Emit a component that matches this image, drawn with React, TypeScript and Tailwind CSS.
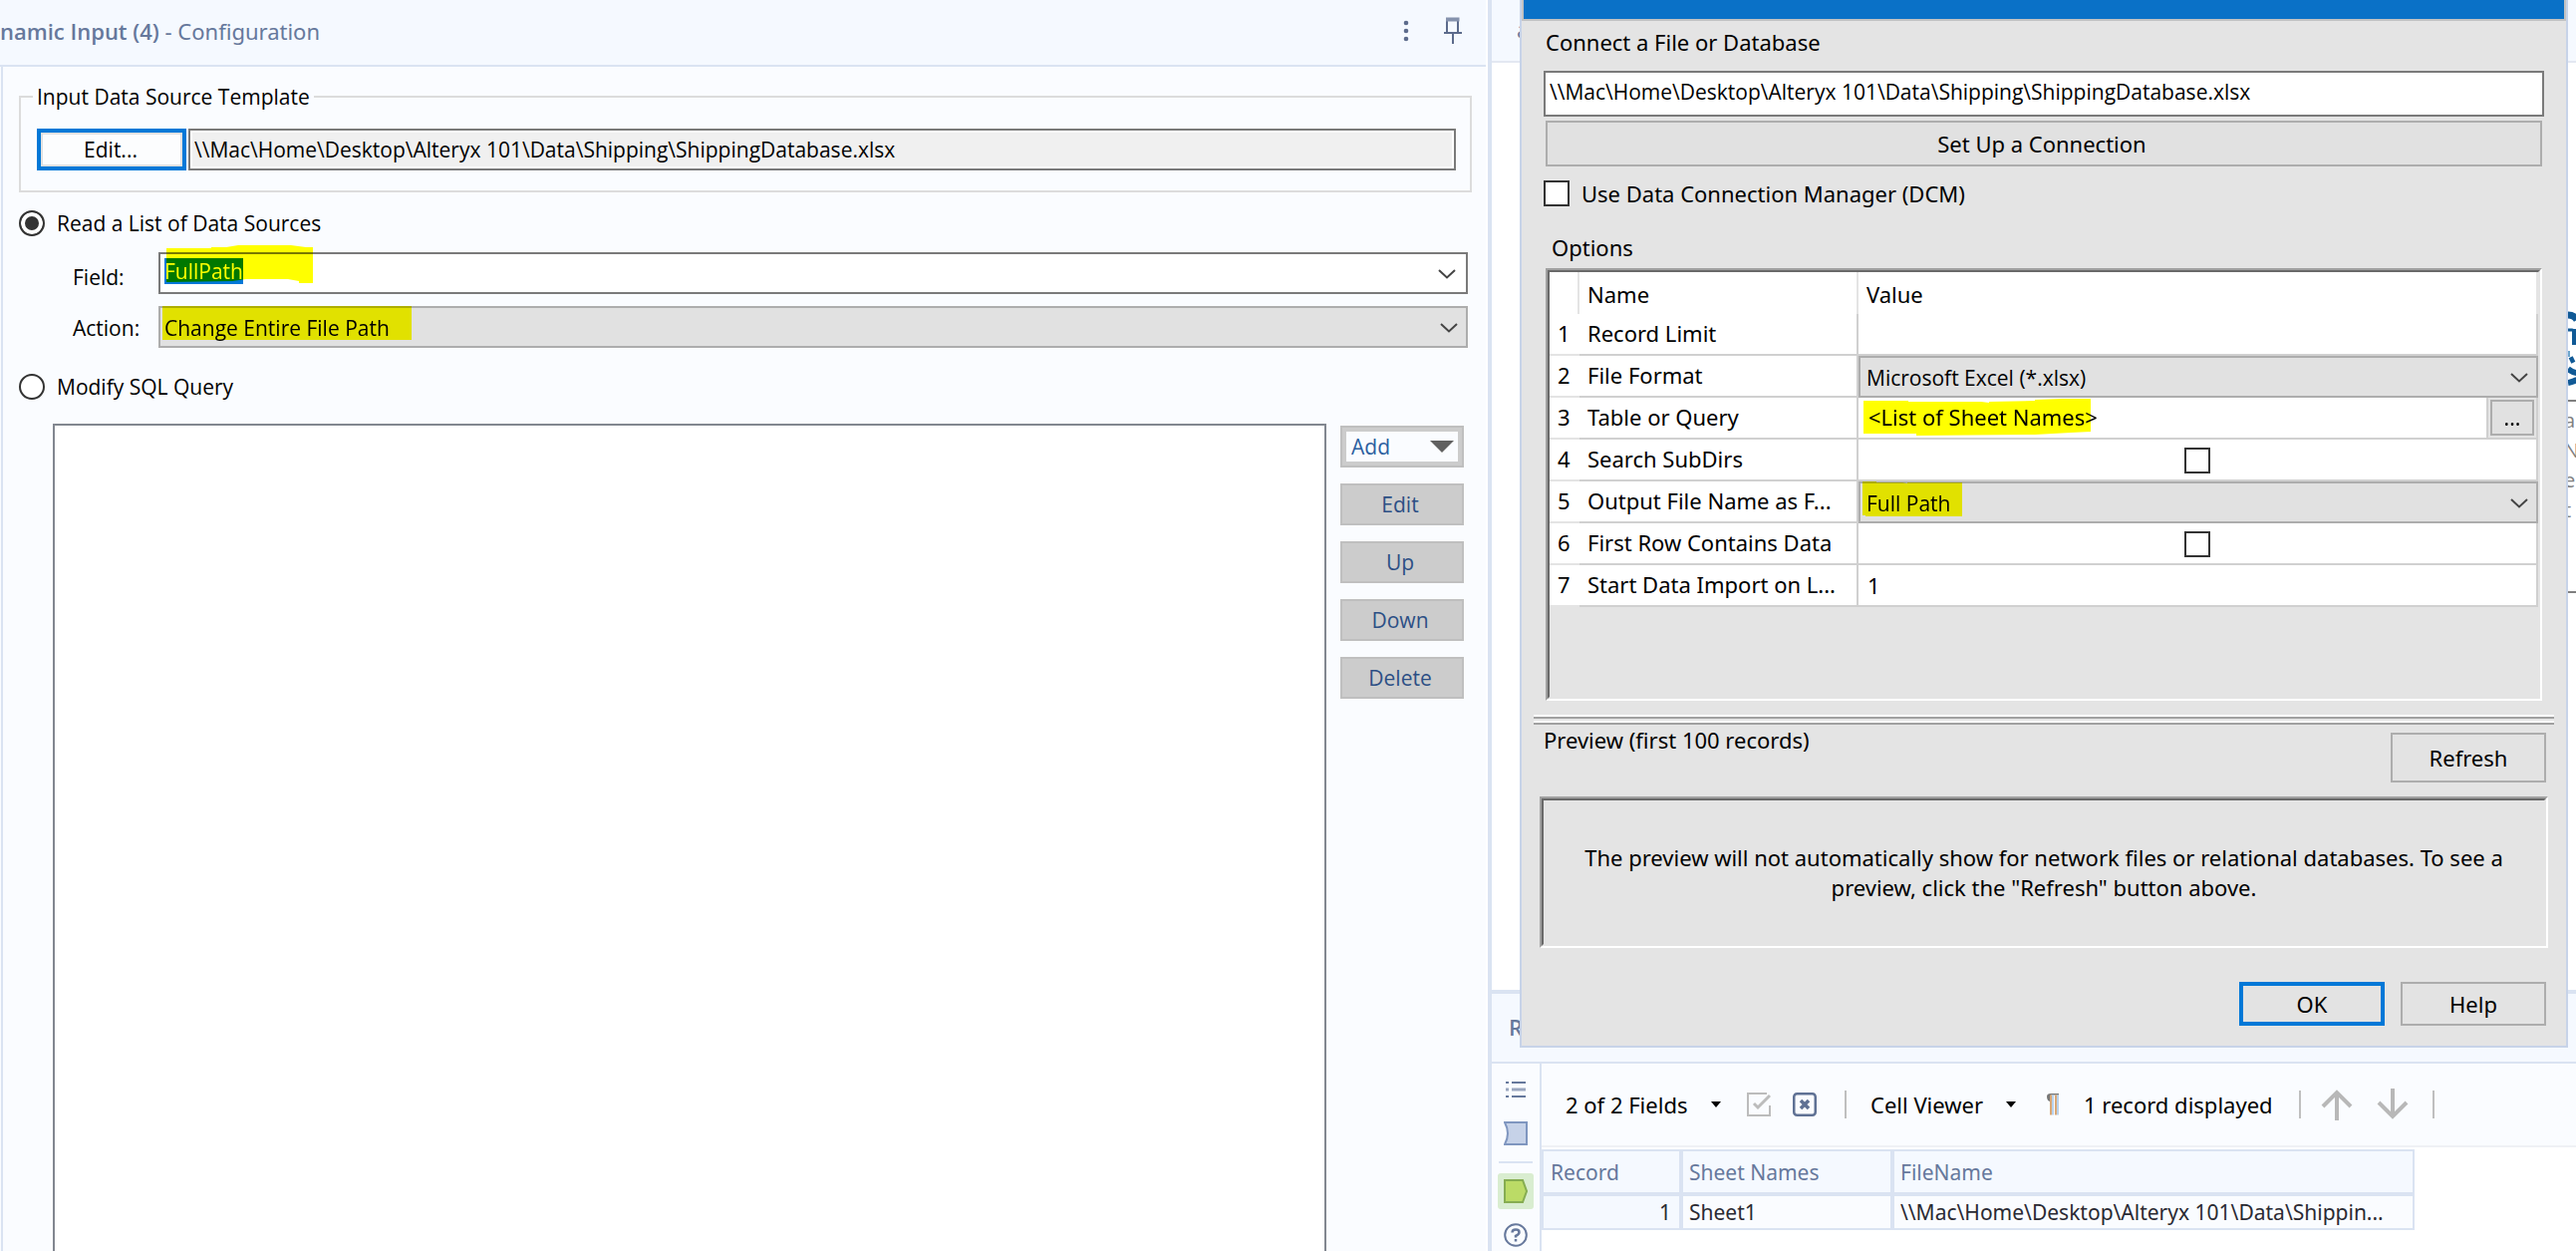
import React from "react";

const FILE_PATH = "\\\\Mac\\Home\\Desktop\\Alteryx 101\\Data\\Shipping\\ShippingDatabase.xlsx";

function Chevron() {
  return (
    <svg
      className="pointer-events-none absolute right-[10px] top-1/2 -mt-[4px]"
      width="18"
      height="10"
      viewBox="0 0 18 10"
      fill="none"
      stroke="#444"
      strokeWidth="2"
      aria-hidden="true"
    >
      <path d="M1 1l8 7.500l8-7.500" />
    </svg>
  );
}

function Marker({ className, points, box }: { className: string; points: string; box: string }) {
  return (
    <svg
      className={"pointer-events-none absolute mix-blend-multiply " + className}
      viewBox={box}
      preserveAspectRatio="none"
      aria-hidden="true"
    >
      <polygon points={points} fill="#ffff00" />
    </svg>
  );
}

function SideButton({ children }: { children: React.ReactNode }) {
  return (
    <button
      type="button"
      className="flex h-[42px] items-center justify-center border-2 border-[#bfbfbf] bg-[#cccccc] pr-[4px] text-[21px] leading-none text-[#2c4f85]"
    >
      {children}
    </button>
  );
}

function ConfigurationPanel() {
  return (
    <section className="flex min-w-0 flex-[1493] flex-col border-r-4 border-[#dae3f2] bg-white">
      <header className="mr-[2px] flex h-[67px] shrink-0 items-center border-b-2 border-[#dae3f2] bg-[#f5f9ff] pb-[3px] text-[22px] text-[#66789c]">
        <h1 className="whitespace-pre leading-[30px]">
          <span className="font-semibold">namic Input (4)</span>
          <span className="font-['Noto_Sans',sans-serif]">{" - Configuration"}</span>
        </h1>
        <div className="ml-auto flex items-center gap-[34px] pr-[23px]">
          <button type="button" aria-label="More options">
            <svg width="6" height="22" viewBox="0 0 6 22" fill="#5c6b8c">
              <circle cx="3" cy="3" r="2.300" />
              <circle cx="3" cy="11" r="2.300" />
              <circle cx="3" cy="19" r="2.300" />
            </svg>
          </button>
          <button type="button" aria-label="Pin panel">
            <svg width="20" height="28" viewBox="0 0 20 28" fill="none" stroke="#5c6b8c" strokeWidth="2">
              <path d="M4 3v13M15 3v13M1 16h18M10 16v11" />
              <path d="M3 2.500h13.500" strokeWidth="4" stroke="#8592ad" />
            </svg>
          </button>
        </div>
      </header>

      <div className="mr-[2px] flex flex-1 flex-col bg-[#fafcff]">
        <div className="ml-[1px] flex flex-1 flex-col border-l-2 border-[#dae3f2] pl-[16px] pr-[14px] text-[21px] leading-[28px] text-black">
          <fieldset className="mt-[16px] h-[110px] border-2 border-[#dcdcdc] pl-[16px] pr-[14px]">
            <legend className="-ml-[4px] h-[28px] px-[4px]">Input Data Source Template</legend>
            <div className="mt-[18px] flex h-[42px] gap-[2px]">
              <button
                type="button"
                className="w-[150px] shrink-0 border-4 border-[#0078d7] bg-[#fcfdfe] pr-[2px] outline-2 -outline-offset-[6px] outline-[#e1e1e1]"
              >
                Edit...
              </button>
              <input
                aria-label="Input data source template path"
                readOnly
                value={FILE_PATH}
                className="min-w-0 flex-1 border-2 border-[#7a7a7a] bg-[#f0f0f0] px-[4px] shadow-[inset_0_0_0_2px_white]"
              />
            </div>
          </fieldset>

          <label className="mt-[17px] flex h-[28px] items-center gap-[12px]">
            <input
              type="radio"
              name="mode"
              defaultChecked
              className="h-[26px] w-[26px] appearance-none rounded-full border-2 border-[#333] bg-white checked:bg-[#333] checked:shadow-[inset_0_0_0_4px_white]"
            />
            Read a List of Data Sources
          </label>

          <div className="mr-[4px] mt-[15px] grid grid-cols-[86px_1fr] gap-y-[12px] pl-[54px]">
            <label htmlFor="field" className="self-center pt-[8px]">
              Field:
            </label>
            <div className="relative isolate flex h-[42px] items-start border-2 border-[#7a7a7a] bg-white pl-[4px] pt-[4px]">
              <input
                id="field"
                role="combobox"
                aria-expanded="false"
                aria-controls="field-list"
                defaultValue="FullPath"
                className="field-sizing-content h-[26px] bg-[#0078d7] text-white"
              />
              <Chevron />
              <Marker
                className="-top-[9px] left-[6px] h-[38px] w-[147px]"
                box="0 0 147 38"
                points="0,3 45,3 45,2 60,2 72,0 125,0 140,2 147,2 147,38 133,38 133,36 122,34 80,34 66,36 0,37"
              />
            </div>
            <label htmlFor="action" className="self-center pt-[2px]">
              Action:
            </label>
            <div className="relative isolate h-[42px]">
              <select
                id="action"
                className="h-full w-full appearance-none border-2 border-[#adadad] bg-[#e1e1e1] pl-[4px] pt-[2px]"
              >
                <option>Change Entire File Path</option>
              </select>
              <Chevron />
              <Marker
                className="left-[4px] top-0 h-[34px] w-[250px]"
                box="0 0 250 34"
                points="0,0 250,0 250,34 0,34"
              />
            </div>
          </div>

          <label className="mt-[25px] flex h-[28px] items-center gap-[12px]">
            <input
              type="radio"
              name="mode"
              className="h-[26px] w-[26px] appearance-none rounded-full border-2 border-[#333] bg-white"
            />
            Modify SQL Query
          </label>

          <div className="mr-[8px] mt-[23px] flex flex-1 gap-[14px] pl-[34px]">
            <textarea
              aria-label="SQL query edits"
              className="min-w-0 flex-1 resize-none border-2 border-b-0 border-[#828790] bg-white"
            />
            <div className="mt-[2px] flex w-[124px] flex-col gap-[16px]">
              <button
                type="button"
                className="flex h-[42px] items-center justify-between border-2 border-[#bfbfbf] bg-[#fafcff] pl-[9px] pr-[8px] leading-none text-[#2c5fa0] shadow-[inset_0_0_0_4px_#cccccc]"
              >
                Add
                <svg width="24" height="12" viewBox="0 0 24 12" fill="#606060" aria-hidden="true">
                  <path d="M0 0h24L12 12z" />
                </svg>
              </button>
              <SideButton>Edit</SideButton>
              <SideButton>Up</SideButton>
              <SideButton>Down</SideButton>
              <SideButton>Delete</SideButton>
            </div>
          </div>
        </div>
      </div>
    </section>
  );
}

function OptionCheckbox({ label }: { label: string }) {
  return (
    <input
      type="checkbox"
      aria-label={label}
      className="mx-auto mt-[2px] block h-[26px] w-[26px] appearance-none border-2 border-[#333] bg-white"
    />
  );
}

const options: { name: string; value: React.ReactNode }[] = [
  { name: "Record Limit", value: null },
  {
    name: "File Format",
    value: (
      <div className="relative h-[42px]">
        <select
          aria-label="File Format"
          className="h-full w-full appearance-none border-2 border-[#adadad] bg-[#e1e1e1] pl-[6px] pt-[2px] font-['Open_Sans',sans-serif] text-[21px]"
        >
          <option>Microsoft Excel (*.xlsx)</option>
        </select>
        <Chevron />
      </div>
    ),
  },
  {
    name: "Table or Query",
    value: (
      <div className="relative isolate flex h-[42px] border-b-2 border-r-2 border-[#d0d0d0]">
        <span className="flex-1 pl-[10px] pt-[4px]">&lt;List of Sheet Names&gt;</span>
        <div className="w-[50px] border-l-2 border-[#d0d0d0] bg-[#e4e4e4] p-[2px]">
          <button
            type="button"
            className="h-full w-full border-2 border-[#adadad] bg-[#e1e1e1] text-[21px] leading-[28px]"
          >
            ...
          </button>
        </div>
        <Marker
          className="left-[5px] top-0 h-[39px] w-[228px]"
          box="0 0 228 39"
          points="0,3 45,3 45,4 118,4 126,5 126,4 172,3 172,2 200,1 228,1 228,34 208,35 172,37 53,38 53,36 0,36"
        />
      </div>
    ),
  },
  { name: "Search SubDirs", value: <OptionCheckbox label="Search SubDirs" /> },
  {
    name: "Output File Name as F...",
    value: (
      <div className="relative isolate h-[42px]">
        <select
          aria-label="Output File Name as Field"
          className="h-full w-full appearance-none border-2 border-[#adadad] bg-[#e1e1e1] pl-[6px] pt-[2px] font-['Open_Sans',sans-serif] text-[21px]"
        >
          <option>Full Path</option>
        </select>
        <Chevron />
        <Marker
          className="left-[4px] top-0 h-[36px] w-[100px]"
          box="0 0 100 36"
          points="0,0 14,0 14,1 40,1 45,2 45,1 100,1 100,35 3,35 3,34 0,34"
        />
      </div>
    ),
  },
  { name: "First Row Contains Data", value: <OptionCheckbox label="First Row Contains Data" /> },
  { name: "Start Data Import on L...", value: <span className="pl-[9px]">1</span> },
];

function isFilled(index: number) {
  return index === 1 || index === 2 || index === 4;
}

function OptionsGrid() {
  return (
    <div className="h-[434px] border-2 border-b-white border-l-[#a0a0a0] border-r-white border-t-[#a0a0a0]">
      <div className="h-full border-2 border-b-[#e4e4e4] border-l-[#696969] border-r-[#e4e4e4] border-t-[#696969]">
        <table className="w-full table-fixed border-separate border-spacing-0 bg-white text-left">
          <colgroup>
            <col className="w-[30px]" />
            <col className="w-[280px]" />
            <col />
          </colgroup>
          <thead>
            <tr className="h-[42px]">
              <th className="border-r-2 border-[#e4e4e4] p-0" />
              <th className="border-r-2 border-[#e4e4e4] p-0 pl-[8px] pt-[2px] font-normal">Name</th>
              <th className="border-r-2 border-[#e4e4e4] p-0 pl-[8px] pt-[2px] font-normal">Value</th>
            </tr>
          </thead>
          <tbody>
            {options.map((option, index) => (
              <tr key={option.name} className="h-[42px]">
                <td className="border-b-2 border-[#e4e4e4] p-0 pb-[2px] pl-[8px]">{index + 1}</td>
                <td className="overflow-hidden whitespace-nowrap border-b-2 border-r-2 border-[#d0d0d0] p-0 pb-[2px] pl-[8px]">
                  {option.name}
                </td>
                <td
                  className={
                    isFilled(index) ? "h-[42px] p-0" : "h-[42px] border-b-2 border-r-2 border-[#d0d0d0] p-0"
                  }
                >
                  {option.value}
                </td>
              </tr>
            ))}
          </tbody>
        </table>
      </div>
    </div>
  );
}

function ConnectDialog() {
  return (
    <div
      role="dialog"
      aria-label="Connect a File or Database"
      className="absolute left-[28px] right-[8px] top-0 z-10 flex h-[1051px] flex-col border-x-2 border-b-2 border-[#c7d3e8] bg-[#e4e4e4] font-['Noto_Sans',sans-serif] text-[22px] leading-[30px] text-black"
    >
      <div className="h-[21px] shrink-0 border-x-2 border-b-2 border-[#c2c2c2] bg-[#0a71c7]" />

      <div className="flex flex-col px-[22px]">
        <label htmlFor="connection" className="mt-[6px] pl-[2px]">
          Connect a File or Database
        </label>
        <input
          id="connection"
          defaultValue={FILE_PATH}
          className="mt-[14px] h-[46px] border-2 border-[#7a7a7a] bg-white pb-[5px] pl-[4px] font-['Open_Sans',sans-serif] text-[21px]"
        />
        <button
          type="button"
          className="mx-[2px] mt-[4px] h-[46px] border-2 border-[#adadad] bg-[#e1e1e1] pr-[4px]"
        >
          Set Up a Connection
        </button>
        <label className="mt-[12px] flex h-[30px] items-center gap-[12px]">
          <input
            type="checkbox"
            className="h-[26px] w-[26px] appearance-none border-2 border-[#333] bg-white"
          />
          Use Data Connection Manager (DCM)
        </label>
        <h2 className="mt-[24px] pl-[8px]">Options</h2>
        <div className="mt-[6px] px-[2px]">
          <OptionsGrid />
        </div>
      </div>

      <div className="mx-[12px] mt-[14px] border-b-2 border-t-2 border-b-[#a0a0a0] border-t-white" />
      <div className="mx-[12px] mt-[2px] border-b-2 border-t-2 border-b-[#a0a0a0] border-t-white" />

      <div className="mx-[18px] flex flex-1 flex-col pb-[20px]">
        <div className="flex items-start justify-between pl-[4px] pr-[2px]">
          <h2>Preview (first 100 records)</h2>
          <button type="button" className="mt-[8px] h-[50px] w-[156px] border-2 border-[#adadad] bg-[#e3e3e3]">
            Refresh
          </button>
        </div>
        <div className="mt-[14px] h-[152px] border-2 border-b-white border-l-[#a0a0a0] border-r-white border-t-[#a0a0a0]">
          <div className="flex h-full items-center justify-center border-2 border-b-[#e4e4e4] border-l-[#696969] border-r-[#e4e4e4] border-t-[#696969]">
            <p className="w-[950px] text-center">
              The preview will not automatically show for network files or relational databases. To see a
              preview, click the "Refresh" button above.
            </p>
          </div>
        </div>
        <div className="mt-auto flex justify-end gap-[16px] pr-[2px]">
          <button type="button" className="h-[44px] w-[146px] border-4 border-[#0078d7] bg-[#e3e3e3]">
            OK
          </button>
          <button type="button" className="h-[44px] w-[146px] border-2 border-[#adadad] bg-[#e3e3e3]">
            Help
          </button>
        </div>
      </div>
    </div>
  );
}

function Canvas() {
  return (
    <section className="relative h-[993px] shrink-0 overflow-hidden bg-white">
      <div className="h-[63px] border-b-2 border-[#e3e8f2] bg-[#f5f9ff] pl-[25px] pt-[14px] text-[22px] leading-[30px] text-[#66789c]">
        a
      </div>
      <div className="absolute right-0 top-[401px] flex h-[194px] w-[12px] flex-col overflow-hidden border-y-2 border-[#808080] pt-[4px] text-[20px] leading-[30px] text-[#808080]">
        <span>a</span>
        <span>N</span>
        <span>e</span>
        <span>t</span>
      </div>
      <svg
        className="absolute right-0 top-[312px]"
        width="8"
        height="76"
        viewBox="0 0 8 76"
        fill="none"
        stroke="#115a96"
        aria-hidden="true"
      >
        <path d="M0 4q6 0 9 5" strokeWidth="7" />
        <path d="M0 19h4q3 0 4 14" strokeWidth="3" />
        <path d="M6 18v16" strokeWidth="4" />
        <path d="M2 50l4-2M0 58q5 4 9 4M0 72q5-1 9-3" strokeWidth="6" />
        <path d="M0 43h2" strokeWidth="6" stroke="#6ea6cc" />
      </svg>
    </section>
  );
}

function Divider() {
  return <span className="h-[28px] w-[2px] bg-[#bfbfbf]" />;
}

function Caret() {
  return (
    <svg width="10" height="6" viewBox="0 0 10 6" aria-hidden="true">
      <path d="M0 0h10L5 6z" fill="#000" />
    </svg>
  );
}

function ResultsToolbar() {
  return (
    <div className="flex h-[84px] shrink-0 items-center border-b-2 border-[#eff1f5] bg-[#fafcff] pl-[24px] font-['Noto_Sans',sans-serif] text-[22px] leading-[30px] text-black">
      <button type="button" className="flex w-[156px] items-center justify-between">
        2 of 2 Fields
        <Caret />
      </button>
      <button type="button" aria-label="Select all" className="ml-[26px]">
        <svg width="24" height="24" viewBox="0 0 24 24" fill="none" stroke="#bcbcbc" strokeWidth="2">
          <path d="M20 1H1v22h22v-10" />
          <path d="M7 11l4 4L23 3" strokeWidth="3" />
        </svg>
      </button>
      <button type="button" aria-label="Clear selection" className="ml-[22px]">
        <svg width="24" height="24" viewBox="0 0 24 24" fill="none" stroke="#5f7194" strokeWidth="2.500">
          <rect x="1.250" y="1.250" width="21.500" height="21.500" rx="3" />
          <path d="M8 8l8 8M16 8l-8 8" strokeWidth="3.500" />
        </svg>
      </button>
      <span className="w-[28px]" />
      <Divider />
      <button type="button" className="ml-[24px] flex w-[146px] items-center justify-between">
        Cell Viewer
        <Caret />
      </button>
      <button type="button" aria-label="Show whitespace" className="ml-[30px]">
        <svg width="14" height="24" viewBox="0 0 14 24">
          <path d="M1 4q0-3 4-3h8v1.500H5V9q-4 0-4-5z" fill="#777" />
          <path d="M5 2.500v20M10 2.500v20" stroke="#d9a877" strokeWidth="2" />
          <path d="M7 2.500v20M12 2.500v20" stroke="#a3c4e8" strokeWidth="1.500" />
        </svg>
      </button>
      <span className="ml-[24px] w-[192px]">1 record displayed</span>
      <span className="w-[24px]" />
      <Divider />
      <button type="button" aria-label="Previous record" className="ml-[20px]">
        <svg width="32" height="32" viewBox="0 0 32 32" fill="none" stroke="#b8b8b8" strokeWidth="4">
          <path d="M16 32V3M2 18L16 4l14 14" />
        </svg>
      </button>
      <button type="button" aria-label="Next record" className="ml-[24px]">
        <svg width="32" height="32" viewBox="0 0 32 32" fill="none" stroke="#b8b8b8" strokeWidth="4">
          <path d="M16 0v29M2 14l14 14l14-14" />
        </svg>
      </button>
      <span className="w-[24px]" />
      <Divider />
    </div>
  );
}

function ResultsPanel() {
  return (
    <section className="flex flex-1 flex-col border-t-4 border-[#dae3f2] bg-white">
      <h2 className="h-[70px] shrink-0 border-b-2 border-[#dae3f2] bg-[#f5f9ff] pl-[17px] pt-[18px] text-[22px] font-semibold leading-[30px] text-[#66789c]">
        R
      </h2>
      <div className="flex flex-1">
        <nav className="flex w-[50px] shrink-0 flex-col items-center border-r-2 border-[#dae3f2] bg-[#fafcff] pt-[17px]">
          <button type="button" aria-label="Messages">
            <svg width="20" height="18" viewBox="0 0 20 18" stroke="#66789c" strokeWidth="2">
              <path d="M0 2h3M6 2h14M0 16h3M6 16h14" />
              <path d="M0 9h3M6 9h14" strokeWidth="3" stroke="#9aa6bf" />
            </svg>
          </button>
          <button type="button" aria-label="Input anchor" className="mt-[22px]">
            <svg width="24" height="26" viewBox="0 0 24 26" fill="#c6d2e8" stroke="#7f96bf" strokeWidth="2">
              <path d="M1 2h22v22H1q6-11 0-22z" />
            </svg>
          </button>
          <span className="mt-[15px] h-[2px] w-[34px] bg-[#dae3f2]" />
          <button
            type="button"
            aria-label="Output anchor"
            className="mt-[10px] flex h-[36px] w-[36px] items-center justify-center rounded-[3px] bg-[#d9edd0]"
          >
            <svg width="24" height="24" viewBox="0 0 24 24" fill="#bbdb66" stroke="#86ad51" strokeWidth="2">
              <path d="M1 1h18l4 11l-4 11H1z" />
            </svg>
          </button>
          <button type="button" aria-label="Help" className="mt-[14px]">
            <svg width="24" height="24" viewBox="0 0 24 24" fill="none" stroke="#66789c" strokeWidth="2">
              <circle cx="12" cy="12" r="10.800" />
              <path d="M8.500 9.500q0-3 3.500-3t3.500 2.700q0 2-3.500 3.600v1.700" strokeWidth="2.500" />
              <path d="M12 16v2.500" strokeWidth="2.500" />
            </svg>
          </button>
        </nav>
        <div className="min-w-0 flex-1">
          <ResultsToolbar />
          <table className="mt-[2px] w-[876px] table-fixed border-collapse border-2 border-[#dae3f2] bg-[#f5f9ff] text-left font-['Noto_Sans',sans-serif] text-[21px] leading-[28px]">
            <thead>
              <tr className="h-[44px] border-b-4 border-[#dae3f2] text-[#66789c]">
                <th className="w-[139px] border-r-4 border-[#dae3f2] p-0 pl-[7px] font-normal">Record</th>
                <th className="w-[212px] border-r-4 border-[#dae3f2] p-0 pl-[6px] font-normal">Sheet Names</th>
                <th className="p-0 pl-[6px] font-normal">FileName</th>
              </tr>
            </thead>
            <tbody>
              <tr className="h-[35px] text-[#2a2a33]">
                <td className="border-r-4 border-[#dae3f2] p-0 pr-[8px] text-right">1</td>
                <td className="border-r-4 border-[#dae3f2] bg-[#fafcff] p-0 pl-[6px]">Sheet1</td>
                <td className="whitespace-nowrap bg-[#fafcff] p-0 pl-[6px]">
                  {"\\\\Mac\\Home\\Desktop\\Alteryx 101\\Data\\Shippin..."}
                </td>
              </tr>
            </tbody>
          </table>
        </div>
      </div>
    </section>
  );
}

export default function App() {
  return (
    <div className="flex h-screen min-h-[760px] w-full overflow-hidden font-['Open_Sans',sans-serif]">
      <ConfigurationPanel />
      <main className="relative flex min-w-0 flex-[1088] flex-col">
        <Canvas />
        <ResultsPanel />
        <ConnectDialog />
      </main>
    </div>
  );
}
